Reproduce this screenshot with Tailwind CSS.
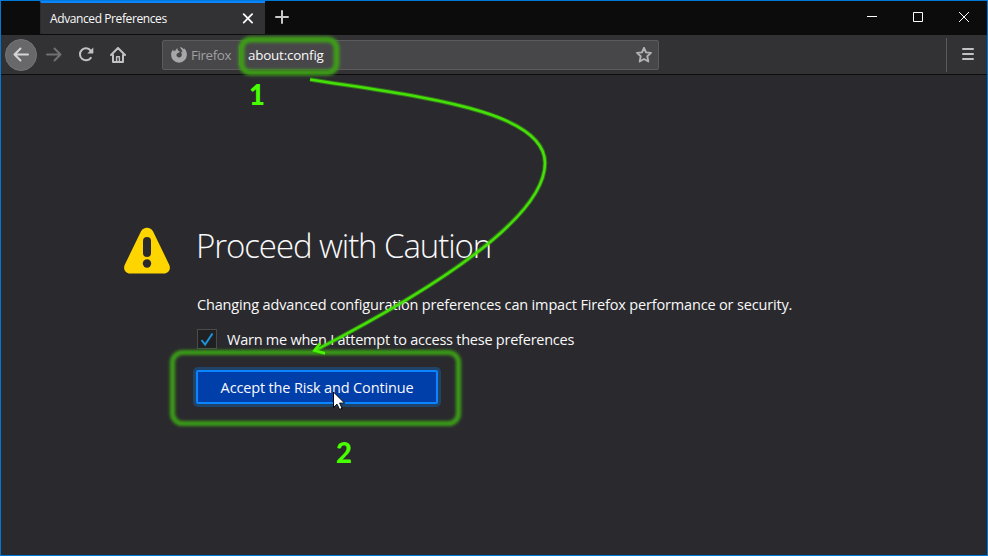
<!DOCTYPE html>
<html lang="en">
<head>
<meta charset="utf-8">
<title>Advanced Preferences</title>
<script src="https://cdn.jsdelivr.net/npm/@tailwindcss/browser@4"></script>
</head>
<body class="h-[556px] w-[988px] overflow-hidden bg-[#2a2a2e] font-['Open_Sans','Noto_Sans',sans-serif] text-[#f9f9fa]">
<div class="relative flex h-[556px] w-[988px] flex-col border border-[#0078d7] bg-[#2a2a2e]">
  <header class="flex h-[33px] shrink-0 bg-[#0c0c0d]">
    <div class="ml-[39px] flex h-[33px] w-[225px] items-center justify-between border-t-2 border-l border-t-[#0a84ff] border-l-[#2b2b2d] bg-[#323234] pr-[11px] pl-[9px]">
      <span class="whitespace-nowrap text-[12px] leading-4 tracking-[-0.4px]">Advanced Preferences</span>
      <svg class="size-3" viewBox="0 0 12 12" fill="none" stroke="#f9f9fa" stroke-width="1.8" stroke-linecap="round"><path d="M1.7 1.2l8.4 8.4M10.1 1.2l-8.4 8.4"/></svg>
    </div>
    <svg class="mt-2 ml-[9px] size-4" viewBox="0 0 16 16" fill="none" stroke="#c8c8c9" stroke-width="2" stroke-linecap="round"><path d="M2 8h12M8 2v12"/></svg>
    <div class="mt-[10px] mr-[17px] ml-auto flex gap-[34px]">
      <svg class="size-3" viewBox="0 0 12 12"><path d="M1 5h10v1H1z" fill="#fff"/></svg>
      <svg class="size-3" viewBox="0 0 12 12" fill="none" stroke="#fff"><path d="M1.5 1.5h9v9h-9z"/></svg>
      <svg class="size-3" viewBox="0 0 12 12" fill="none" stroke="#fff"><path d="M1 1l10 10M11 1L1 11"/></svg>
    </div>
  </header>
  <nav class="flex h-[41px] shrink-0 items-center border-y border-t-[#0c0c0d] border-b-[#0c0c0d] bg-[#323234]">
    <div class="ml-1 flex size-8 items-center justify-center rounded-full border border-[#757577] bg-[#68686a]">
      <svg class="size-4 shrink-0" viewBox="0 0 16 16" fill="none" stroke="#d5d5d6" stroke-width="2" stroke-linecap="round" stroke-linejoin="round"><path d="M15 7.500H1.500M7.500 1.500l-6 6 6 6"/></svg>
    </div>
    <svg class="ml-[9px] size-4" viewBox="0 0 16 16" fill="none" stroke="#707072" stroke-width="2" stroke-linecap="round" stroke-linejoin="round"><path d="M1 7.500h13.500M8.500 1.500l6 6-6 6"/></svg>
    <svg class="ml-4 size-4" viewBox="0 0 16 16"><path d="M12.8 10.900A6 6 0 1 1 12.6 3.500" fill="none" stroke="#c2c2c3" stroke-width="2" stroke-linecap="round"/><path d="M15.3.500v5.600q0 .4-.4.4H9.3z" fill="#c2c2c3"/></svg>
    <svg class="ml-4 size-4" viewBox="0 0 16 16" fill="none" stroke="#c2c2c3" stroke-width="2" stroke-linecap="round" stroke-linejoin="round"><path d="M1 8l7-7 7 7M3 8v7h10V8"/><path d="M6.6 15V9.7h2.8V15" stroke-width="1.4"/></svg>
    <div class="ml-[36px] flex h-[30px] w-[497px] items-center rounded-[2px] border border-[#5b5b5d] bg-[#474749] pl-2 pr-[6px]">
      <svg class="size-4" viewBox="0 0 16 16" fill="#a7a7a9"><path d="M8 15.700A7.900 7.900 0 0 1 .1 7.500C.1 5.500 1 3.700 2.200 2.500l.4 1.800c.6-.5 1.200-.7 1.900-.7C4.800 2.500 5.500 1.500 6.500.9c-.2 1.200 0 2 .6 2.600l1.700.9c-.2 1-1 1.200-1.900 1.500-.9.500-1.600 1.300-1.400 2.400.2 1.300 1.300 2.100 2.600 2.100 1.700 0 2.800-1.300 2.700-2.900-.1-1.200-.6-2-1.400-2.700.8 0 1.500.2 2 .7C11.300 3.600 10.500 2.200 9.300 1.100c-.1-.4-.1-.7 0-1.100 1.200.4 2.500 1.200 3.500 2.200l.2-.9C14.900 2.800 15.900 5 15.900 7.700a7.900 7.900 0 0 1-7.900 8z"/></svg>
      <span class="ml-1 w-[48px] whitespace-nowrap text-[13.400px] leading-5 tracking-[-0.4px] text-[#a0a0a2]">Firefox</span>
      <div class="h-5 w-px bg-[#68686a]"></div>
      <span class="ml-[8px] whitespace-nowrap text-[13.400px] leading-5 tracking-[-0.2px]">about:config</span>
      <svg class="ml-auto size-4" viewBox="0 0 16 16" fill="none" stroke="#b3b3b4" stroke-width="1.9" stroke-linejoin="round"><path d="M8 .8l2 4.600 5 .5-3.700 3.400 1 5.200L8 12l-4.300 2.500 1-5.200L1 5.900l5-.5z"/></svg>
    </div>
    <div class="ml-auto h-[34px] w-px bg-[#5b5b5d]"></div>
    <div class="mr-[13px] ml-[15px] flex w-3 -translate-y-px flex-col gap-[3px]">
      <div class="h-[2px] rounded-full bg-[#c2c2c3]"></div><div class="h-[2px] rounded-full bg-[#c2c2c3]"></div><div class="h-[2px] rounded-full bg-[#c2c2c3]"></div>
    </div>
  </nav>
  <main class="flex pt-[149px] pl-[123px]">
    <svg class="mt-[3px] h-[47px] w-[46px] shrink-0" viewBox="0 0 46 47"><path d="M16.900 4.500C19.500-.5 26.500-.5 29.100 4.500l16 33c2.200 4.500-.5 9-5.200 9H6.100c-4.700 0-7.400-4.500-5.200-9z" fill="#ffd500"/><rect x="19" y="10" width="8" height="20" rx="4" fill="#2a2a2e"/><circle cx="23" cy="36.500" r="4.200" fill="#2a2a2e"/></svg>
    <div class="ml-[26px]">
      <h1 class="h-[44px] whitespace-nowrap text-[33px] leading-[44px] font-light tracking-[-1.080px]">Proceed with Caution</h1>
      <p class="mt-[27px] ml-px h-5 whitespace-nowrap text-[14.500px] leading-5 tracking-[-0.160px]">Changing advanced configuration preferences can impact Firefox performance or security.</p>
      <div class="mt-[15px] ml-px flex h-5 items-center">
        <div class="-mt-[2px] flex size-5 items-center justify-center border border-[#4b4b4e] bg-[#202023]">
          <svg class="size-4" viewBox="0 0 16 16" fill="none" stroke="#1f93dc" stroke-width="2"><path d="M2.500 9l3.600 4.500L13.500 2.500"/></svg>
        </div>
        <span class="ml-[10px] whitespace-nowrap text-[14.500px] leading-5 tracking-[-0.240px]">Warn me when I attempt to access these preferences</span>
      </div>
      <button class="mt-5 flex h-[34px] w-[242px] items-center justify-center rounded-[2px] border-2 border-[#0a84ff] bg-[#003eaa] pt-[2px] shadow-[0_0_0_3px_#204369]"><span class="whitespace-nowrap text-[14.500px] leading-5 tracking-[-0.150px]">Accept the Risk and Continue</span></button>
    </div>
  </main>
  <svg class="pointer-events-none absolute -top-px -left-px h-[556px] w-[988px]" viewBox="0 0 988 556" fill="none">
    <defs><filter id="glow" x="-20%" y="-50%" width="140%" height="200%"><feGaussianBlur stdDeviation="1.6"/></filter></defs>
    <rect x="241.500" y="39.500" width="95" height="33" rx="9" stroke="#3c9b18" stroke-width="6" filter="url(#glow)"/>
    <rect x="172.500" y="352.500" width="286" height="71" rx="10" stroke="#3a9b13" stroke-width="5.200" filter="url(#glow)"/>
    <path d="M310 79.500C420 97 545 110 545 163C545 218 432 290 316 350" stroke="#41dc08" stroke-opacity=".4" stroke-width="4.500"/>
    <path d="M310 79.500C420 97 545 110 545 163C545 218 432 290 316 350" stroke="#44e006" stroke-width="2.500"/>
    <path d="M320 343.500l-5.500 7 10.500 2.800" stroke="#48f500" stroke-width="2.800"/>
    <path d="M333.500 392v15.500l3.500-3.300 2.600 5.300 2.500-1.200-2.500-5.200h5z" fill="#fff" stroke="#000"/>
  </svg>
  <span class="absolute top-[75px] left-[248px] font-['Lato',sans-serif] text-[27.500px] leading-[38px] font-black text-[#48ff00]">1</span>
  <span class="absolute top-[433px] left-[335px] font-['Lato',sans-serif] text-[27.500px] leading-[38px] font-black text-[#48ff00]">2</span>
</div>
</body>
</html>
